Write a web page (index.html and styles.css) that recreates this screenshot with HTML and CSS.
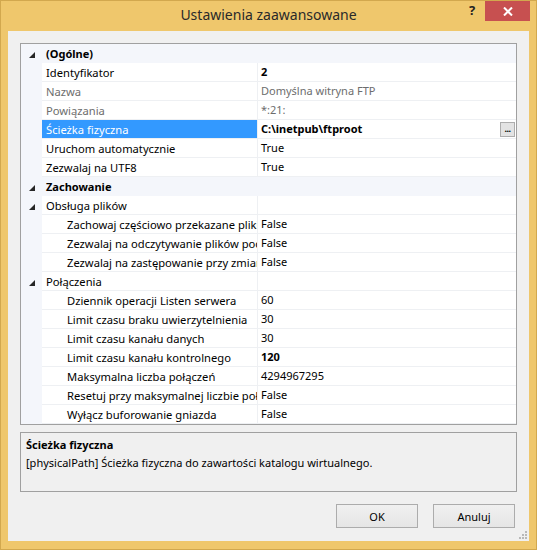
FILE: index.html
```html
<!DOCTYPE html>
<html lang="pl">
<head>
<meta charset="utf-8">
<title>Ustawienia zaawansowane</title>
<link rel="stylesheet" href="styles.css">
</head>
<body>
<div class="titlebar">
  <div class="title">Ustawienia zaawansowane</div>
  <div class="controls">
    <div class="help">?</div>
    <div class="close"><svg width="10" height="9" viewBox="0 0 10 9"><path d="M1 0.5 L9 8.5 M9 0.5 L1 8.5" stroke="#fff" stroke-width="2" fill="none"/></svg></div>
  </div>
</div>
<div class="client">
  <div class="grid">
    <div class="row cat">
      <div class="gutter"><svg class="tri" width="6" height="6" viewBox="0 0 6 6"><polygon points="6,0 6,6 0,6"/></svg></div>
      <div class="catname">(Ogólne)</div>
    </div>
    <div class="row">
      <div class="gutter"></div>
      <div class="name">Identyfikator</div>
      <div class="value bold">2</div>
    </div>
    <div class="row dis">
      <div class="gutter"></div>
      <div class="name">Nazwa</div>
      <div class="value">Domyślna witryna FTP</div>
    </div>
    <div class="row dis">
      <div class="gutter"></div>
      <div class="name">Powiązania</div>
      <div class="value">*:21:</div>
    </div>
    <div class="row sel">
      <div class="gutter"></div>
      <div class="name">Ścieżka fizyczna</div>
      <div class="value bold"><span>C:\inetpub\ftproot</span><span class="dots">...</span></div>
    </div>
    <div class="row">
      <div class="gutter"></div>
      <div class="name">Uruchom automatycznie</div>
      <div class="value">True</div>
    </div>
    <div class="row">
      <div class="gutter"></div>
      <div class="name">Zezwalaj na UTF8</div>
      <div class="value">True</div>
    </div>
    <div class="row cat">
      <div class="gutter"><svg class="tri" width="6" height="6" viewBox="0 0 6 6"><polygon points="6,0 6,6 0,6"/></svg></div>
      <div class="catname">Zachowanie</div>
    </div>
    <div class="row">
      <div class="gutter"><svg class="tri" width="6" height="6" viewBox="0 0 6 6"><polygon points="6,0 6,6 0,6"/></svg></div>
      <div class="name">Obsługa plików</div>
      <div class="value"></div>
    </div>
    <div class="row nested">
      <div class="gutter"></div>
      <div class="name">Zachowaj częściowo przekazane pliki</div>
      <div class="value">False</div>
    </div>
    <div class="row nested">
      <div class="gutter"></div>
      <div class="name">Zezwalaj na odczytywanie plików podczas przekazywania</div>
      <div class="value">False</div>
    </div>
    <div class="row nested">
      <div class="gutter"></div>
      <div class="name">Zezwalaj na zastępowanie przy zmianie nazwy</div>
      <div class="value">False</div>
    </div>
    <div class="row">
      <div class="gutter"><svg class="tri" width="6" height="6" viewBox="0 0 6 6"><polygon points="6,0 6,6 0,6"/></svg></div>
      <div class="name">Połączenia</div>
      <div class="value"></div>
    </div>
    <div class="row nested">
      <div class="gutter"></div>
      <div class="name">Dziennik operacji Listen serwera</div>
      <div class="value">60</div>
    </div>
    <div class="row nested">
      <div class="gutter"></div>
      <div class="name">Limit czasu braku uwierzytelnienia</div>
      <div class="value">30</div>
    </div>
    <div class="row nested">
      <div class="gutter"></div>
      <div class="name">Limit czasu kanału danych</div>
      <div class="value">30</div>
    </div>
    <div class="row nested">
      <div class="gutter"></div>
      <div class="name">Limit czasu kanału kontrolnego</div>
      <div class="value bold">120</div>
    </div>
    <div class="row nested">
      <div class="gutter"></div>
      <div class="name">Maksymalna liczba połączeń</div>
      <div class="value">4294967295</div>
    </div>
    <div class="row nested">
      <div class="gutter"></div>
      <div class="name">Resetuj przy maksymalnej liczbie połączeń</div>
      <div class="value">False</div>
    </div>
    <div class="row nested">
      <div class="gutter"></div>
      <div class="name">Wyłącz buforowanie gniazda</div>
      <div class="value">False</div>
    </div>
  </div>
  <div class="desc">
    <div class="desc-title">Ścieżka fizyczna</div>
    <div class="desc-text">[physicalPath] Ścieżka fizyczna do zawartości katalogu wirtualnego.</div>
  </div>
  <div class="buttons">
    <button class="btn">OK</button>
    <button class="btn">Anuluj</button>
  </div>
  <svg class="grip" width="9" height="9" viewBox="0 0 9 9">
    <rect x="7" y="1" width="2" height="2"/>
    <rect x="4" y="4" width="2" height="2"/><rect x="7" y="4" width="2" height="2"/>
    <rect x="1" y="7" width="2" height="2"/><rect x="4" y="7" width="2" height="2"/><rect x="7" y="7" width="2" height="2"/>
  </svg>
</div>
</body>
</html>
```

FILE: styles.css
```css
* { box-sizing: border-box; }

html, body { margin: 0; padding: 0; }

body {
  width: 537px;
  height: 550px;
  background: #efc76c;
  border: 1px solid #d2a84e;
  font-family: "Noto Sans", "Open Sans", sans-serif;
  font-size: 11px;
  color: #000;
  display: flex;
  flex-direction: column;
  overflow: hidden;
}

.titlebar {
  position: relative;
  height: 30px;
  flex: none;
}

.title {
  text-align: center;
  font-size: 14px;
  line-height: 28px;
  color: #2a2a2a;
}

.controls {
  position: absolute;
  top: 0;
  right: 6px;
  display: flex;
}

.help {
  width: 26px;
  height: 20px;
  text-align: center;
  font-weight: bold;
  font-size: 13px;
  line-height: 18px;
  color: #222;
}

.close {
  width: 45px;
  height: 20px;
  background: #c75050;
  display: flex;
  align-items: center;
  justify-content: center;
}

.client {
  position: relative;
  margin: 0 7px 8px 7px;
  flex: 1;
  background: #f0f0f0;
  padding: 12px;
  display: flex;
  flex-direction: column;
}

.grid {
  height: 382px;
  border: 1px solid #a0a0a0;
  background: #fff;
  flex: none;
}

.row {
  display: flex;
  height: 19px;
  line-height: 20px;
}

.gutter {
  width: 21px;
  flex: none;
  background: #f4f6fb;
  position: relative;
}

.tri {
  position: absolute;
  left: 8px;
  top: 8px;
  fill: #262626;
}

.name {
  width: 216px;
  flex: none;
  padding-left: 4px;
  border-right: 1px solid #eef0f3;
  border-bottom: 1px solid #eef0f3;
  white-space: nowrap;
  overflow: hidden;
  font-size: 11.2px;
}

.value {
  flex: 1;
  padding-left: 3px;
  border-bottom: 1px solid #eef0f3;
  white-space: nowrap;
  overflow: hidden;
  display: flex;
  justify-content: space-between;
  align-items: center;
}

.nested .name { padding-left: 25px; }

.cat { background: #f4f6fb; }

.catname {
  flex: 1;
  padding-left: 4px;
  font-weight: bold;
}

.bold { font-weight: bold; }

.dis .name, .dis .value { color: #6d6d6d; }

.sel .name {
  background: #3399ff;
  color: #fff;
}

.dots {
  width: 15px;
  height: 15px;
  margin-right: 1px;
  border: 1px solid #adadad;
  background: #e3e3e3;
  font-weight: bold;
  font-size: 9px;
  line-height: 12px;
  text-align: center;
  letter-spacing: -0.5px;
}

.desc {
  margin-top: 7px;
  height: 60px;
  border: 1px solid #a0a0a0;
  padding: 3px 5px;
  line-height: 18px;
  flex: none;
}

.desc-title { font-weight: bold; }

.buttons {
  margin-top: 12px;
  display: flex;
  justify-content: flex-end;
  gap: 15px;
  padding-right: 2px;
}

.btn {
  width: 82px;
  height: 24px;
  border: 1px solid #acacac;
  background: linear-gradient(#f0f0f0, #e5e5e5);
  font-family: "Noto Sans", "Open Sans", sans-serif;
  font-size: 11px;
  color: #000;
  padding: 0;
}

.grip {
  position: absolute;
  right: 2px;
  bottom: 2px;
  fill: #b8b8b8;
}
```
